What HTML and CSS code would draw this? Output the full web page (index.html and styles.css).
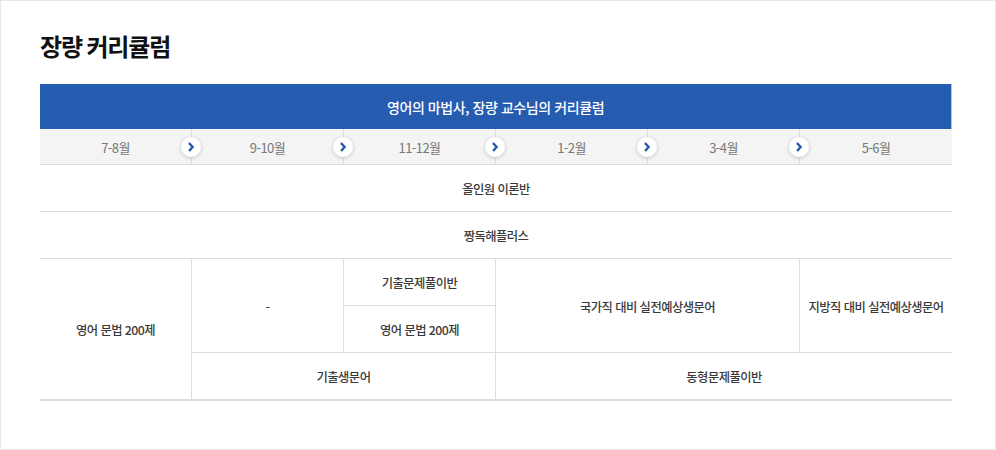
FILE: index.html
```html
<!DOCTYPE html>
<html lang="ko">
<head>
<meta charset="utf-8">
<title>장량 커리큘럼</title>
<link rel="stylesheet" href="styles.css">
</head>
<body>
<section class="panel">
  <h2 class="title">장량 커리큘럼</h2>
  <table class="curriculum">
    <colgroup><col><col><col><col><col><col></colgroup>
    <thead>
      <tr class="head"><th colspan="6">영어의 마법사, 장량 교수님의 커리큘럼</th></tr>
      <tr class="months">
        <th>7-8월<span class="arrow"><svg viewBox="0 0 8 10" width="8" height="10"><path d="M2 1l3.6 4L2 9" fill="none" stroke="#265cb0" stroke-width="2.4"/></svg></span></th>
        <th>9-10월<span class="arrow"><svg viewBox="0 0 8 10" width="8" height="10"><path d="M2 1l3.6 4L2 9" fill="none" stroke="#265cb0" stroke-width="2.4"/></svg></span></th>
        <th>11-12월<span class="arrow"><svg viewBox="0 0 8 10" width="8" height="10"><path d="M2 1l3.6 4L2 9" fill="none" stroke="#265cb0" stroke-width="2.4"/></svg></span></th>
        <th>1-2월<span class="arrow"><svg viewBox="0 0 8 10" width="8" height="10"><path d="M2 1l3.6 4L2 9" fill="none" stroke="#265cb0" stroke-width="2.4"/></svg></span></th>
        <th>3-4월<span class="arrow"><svg viewBox="0 0 8 10" width="8" height="10"><path d="M2 1l3.6 4L2 9" fill="none" stroke="#265cb0" stroke-width="2.4"/></svg></span></th>
        <th>5-6월</th>
      </tr>
    </thead>
    <tbody>
      <tr><td colspan="6">올인원 이론반</td></tr>
      <tr><td colspan="6">짱독해플러스</td></tr>
      <tr>
        <td rowspan="3">영어 문법 200제</td>
        <td rowspan="2">-</td>
        <td>기출문제풀이반</td>
        <td rowspan="2" colspan="2">국가직 대비 실전예상생문어</td>
        <td rowspan="2" class="last">지방직 대비 실전예상생문어</td>
      </tr>
      <tr><td>영어 문법 200제</td></tr>
      <tr>
        <td colspan="2">기출생문어</td>
        <td colspan="3" class="last">동형문제풀이반</td>
      </tr>
    </tbody>
  </table>
</section>
</body>
</html>
```
FILE: styles.css
```css
* { box-sizing: border-box; }
html, body { margin: 0; padding: 0; background: #fff; }
body { font-family: "Noto Sans CJK KR", "Noto Sans", sans-serif; }
.panel {
  width: 996px;
  height: 450px;
  border: 1px solid #e8e8e8;
  padding: 27px 39px 0;
}
.title {
  margin: 0 0 21px;
  height: 35px;
  font-size: 24px;
  line-height: 36px;
  font-weight: 700;
  letter-spacing: -1.15px;
  word-spacing: -1px;
  color: #111;
}
.curriculum {
  width: 912px;
  table-layout: fixed;
  border-collapse: separate;
  border-spacing: 0;
}
.curriculum col { width: 152px; }
.head th {
  height: 45px;
  padding: 1px 0 0;
  background: #265cb0;
  color: #fff;
  font-size: 14px;
  font-weight: 500;
  letter-spacing: -0.42px;
  border-right: 1px solid #b9c4d6;
}
.months th {
  position: relative;
  height: 36px;
  padding: 1px 0 0;
  background: #f4f4f4;
  color: #777;
  font-size: 13px;
  font-weight: 400;
  letter-spacing: -0.55px;
  border-bottom: 1px solid #ddd;
  border-right: 1px solid #ddd;
}
.months th:last-child { border-right: 0; }
.arrow {
  position: absolute;
  top: 8px;
  right: -10px;
  z-index: 1;
  display: flex;
  align-items: center;
  justify-content: center;
  width: 20px;
  height: 20px;
  border-radius: 50%;
  background: #fff;
  box-shadow: 0 1px 4px rgba(0, 0, 0, 0.2);
}
td {
  height: 47px;
  padding: 1px 0 0;
  text-align: center;
  color: #3a3a3a;
  font-size: 12.3px;
  font-weight: 500;
  letter-spacing: -0.55px;
  border-bottom: 1px solid #ddd;
  border-right: 1px solid #ddd;
}
td[colspan="6"], td.last { border-right: 0; }
td[rowspan="2"] { padding-top: 3px; }
tbody tr:last-child td,
td[rowspan="3"] { border-bottom-width: 2px; }
tbody tr:last-child td { height: 48px; padding-top: 2px; }
```
